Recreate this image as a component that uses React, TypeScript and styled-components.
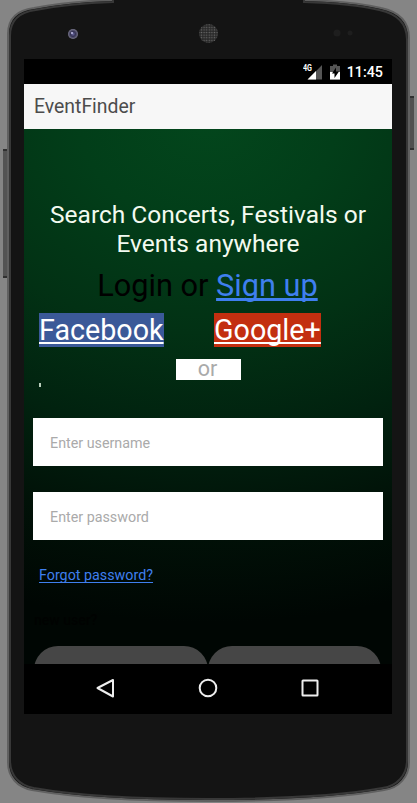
import React from 'react';
import styled, { createGlobalStyle } from 'styled-components';

const GlobalStyle = createGlobalStyle`
  *, *::before, *::after { box-sizing: border-box; }
  html, body { margin: 0; padding: 0; background: #858585; overflow: hidden; }
`;

const Stage = styled.div`
  position: relative;
  display: flex;
  align-items: flex-start;
  width: 417px;
  height: 803px;
  overflow: hidden;
  background: #858585;
  font-family: Roboto, sans-serif;
`;

const DeviceArt = styled.svg`
  position: absolute;
  inset: 0;
  display: block;
`;

const Screen = styled.div`
  position: relative;
  width: 368px;
  height: 655px;
  margin: 59px 0 0 24px;
  display: flex;
  flex-direction: column;
  background: #000;
`;

const StatusBar = styled.div`
  height: 25px;
  flex: none;
  display: flex;
  align-items: center;
  justify-content: flex-end;
  padding-right: 9px;
  color: #fff;
`;

const Clock = styled.span`
  margin-left: 6px;
  font-size: 14.3px;
  font-weight: 500;
  line-height: 25px;
  padding-top: 1px;
`;

const TitleBar = styled.header`
  height: 45px;
  flex: none;
  padding-left: 10px;
  background: #f7f7f7;
  color: #4c4c4c;
  font-size: 19.4px;
  line-height: 45px;
`;

const Content = styled.main`
  flex: 1;
  min-height: 0;
  overflow: hidden;
  display: flex;
  flex-direction: column;
  background: radial-gradient(ellipse 640px 500px at 50% -6px, #03461c 0%, #023e19 20%, #023114 42%, #01220f 62%, #011208 80%, #000603 100%);

  & > * { flex: none; }
`;

const Headline = styled.h1`
  margin: 71px 0 0;
  text-align: center;
  color: #f3faf0;
  font-size: 24.5px;
  font-weight: 400;
  line-height: 29px;
  white-space: nowrap;
`;

const LoginLine = styled.div`
  margin-top: 10px;
  padding-right: 1px;
  height: 36px;
  text-align: center;
  font-size: 30.7px;
  line-height: 36px;
  color: #000;
  white-space: nowrap;
`;

const Link = styled.a<{ $thick?: boolean }>`
  color: #3f7fee;
  text-decoration: underline;
  text-decoration-thickness: ${(p) => (p.$thick ? '3px' : '1px')};
  text-underline-offset: 2px;
  text-decoration-skip-ink: none;
`;

const SocialRow = styled.div`
  display: grid;
  grid-template-columns: 175px 1fr;
  justify-items: start;
  margin: 9px 0 0 15px;
`;

const SocialLink = styled.a<{ $bg: string }>`
  height: 34px;
  background: ${(p) => p.$bg};
  color: #fff;
  font-size: 28.7px;
  line-height: 34px;
  text-decoration: underline;
  text-decoration-thickness: 2px;
  text-underline-offset: 2px;
  text-decoration-skip-ink: none;
  white-space: nowrap;
`;

const Divider = styled.div`
  width: 65px;
  height: 21px;
  margin: 12px 0 0 152px;
  padding-right: 2px;
  background: #fff;
  color: #aaa;
  text-align: center;
  font-size: 21.5px;
  line-height: 20px;
`;

const Tick = styled.div`
  width: 2px;
  height: 4px;
  margin: 3px 0 0 15px;
  background: #b9cdbb;
`;

const Form = styled.form`
  margin-top: 31px;
`;

const Field = styled.input`
  display: block;
  width: 349.5px;
  height: 48px;
  margin: 0 0 26px 9px;
  padding: 1px 17px 0;
  border: 0;
  border-radius: 0;
  background: #fff;
  font: 14.3px Roboto, sans-serif;
  &::placeholder { color: #aaa; opacity: 1; }
`;

const Forgot = styled.div`
  margin: 0 0 0 15px;
  height: 18px;
  font-size: 14.3px;
  line-height: 18px;
`;

const NewUser = styled.div`
  margin: 27px 0 0 10px;
  height: 18px;
  color: #000201;
  font-size: 14px;
  font-weight: 500;
  line-height: 18px;
`;

const Actions = styled.div`
  display: flex;
  margin: 17px 0 0 10px;
`;

const Action = styled.button`
  width: 173.5px;
  height: 48px;
  flex: none;
  border: 0;
  border-radius: 24px;
  background: #464646;
`;

const NavBar = styled.nav`
  height: 50px;
  flex: none;
  display: flex;
  align-items: center;
  justify-content: center;
  gap: 78px;
  padding-bottom: 2px;
  background: #000;
`;

const outline =
  'M8 34 C8 18 18 10 34 8 C60 3 82 1 112 0 L112 -6 L305 -6 L305 0 C338 1 364 4 381 8 C400 12 409 22 409 38 L409 762 C409 777 399 788 384 790 C345 797 280 801 208 801 C136 801 72 797 32 790 C17 787 8 777 8 762 Z';

function Device() {
  return (
    <DeviceArt width="417" height="803" viewBox="0 0 417 803">
      <defs>
        <pattern id="mesh" width="2.6" height="2.6" patternUnits="userSpaceOnUse">
          <circle cx="1.3" cy="1.3" r=".75" fill="#686868" />
        </pattern>
        <radialGradient id="lens">
          <stop offset="0" stopColor="#6a68a0" />
          <stop offset=".5" stopColor="#353354" />
          <stop offset="1" stopColor="#77758a" />
        </radialGradient>
      </defs>
      <rect x="3" y="150" width="5" height="127" fill="#535353" />
      <path d="M3 150h5M3 277h5" stroke="#303030" strokeWidth="2" />
      <rect x="409" y="97" width="5" height="52" fill="#505050" />
      <path d="M409 97h5M409 149h5" stroke="#303030" strokeWidth="2" />
      <path d={outline} fill="#141414" stroke="#606060" strokeWidth="2" />
      <path d={outline} fill="#141414" stroke="#383838" strokeWidth="2" transform="translate(2.1 2) scale(.99 .995)" />
      <circle cx="73" cy="34" r="5" fill="url(#lens)" />
      <circle cx="72" cy="33" r="1" fill="#c3c2e8" />
      <circle cx="208.500" cy="33.500" r="9.500" fill="#292929" />
      <circle cx="208.500" cy="33.500" r="9.500" fill="url(#mesh)" />
      <circle cx="337" cy="33" r="3.500" fill="#1e1e1e" />
      <circle cx="350" cy="33" r="2.500" fill="#1e1e1e" />
    </DeviceArt>
  );
}

function StatusIcons() {
  return (
    <svg width="38" height="18" viewBox="0 0 38 18">
      <path d="M19 2v14.500H5z" fill="#555" />
      <path d="M13 8V16.500H4.500z" fill="#fff" />
      <text x="0" y="8" fontFamily="Roboto" fontWeight="700" fontSize="9" fill="#fff" textLength="9" lengthAdjust="spacingAndGlyphs">4G</text>
      <path d="M27 3h3V1.500h4V3h3v13.500H27z" fill="#555" />
      <path d="M27 9h10v7.500H27z" fill="#fff" />
      <path d="M33 4.500l-4 6h2.500v4.500L36 8.500h-3z" fill="#000" />
    </svg>
  );
}

export default function App() {
  return (
    <Stage>
      <GlobalStyle />
      <Device />
      <Screen>
        <StatusBar>
          <StatusIcons />
          <Clock>11:45</Clock>
        </StatusBar>
        <TitleBar>EventFinder</TitleBar>
        <Content>
          <Headline>
            Search Concerts, Festivals or
            <br />
            Events anywhere
          </Headline>
          <LoginLine>
            Login or <Link $thick>Sign up</Link>
          </LoginLine>
          <SocialRow>
            <SocialLink $bg="#3b5998">Facebook</SocialLink>
            <SocialLink $bg="#c32f10">Google+</SocialLink>
          </SocialRow>
          <Divider>or</Divider>
          <Tick />
          <Form>
            <Field placeholder="Enter username" />
            <Field type="password" placeholder="Enter password" />
          </Form>
          <Forgot>
            <Link>Forgot password?</Link>
          </Forgot>
          <NewUser>new user?</NewUser>
          <Actions>
            <Action aria-label="Log in" />
            <Action aria-label="Register" />
          </Actions>
        </Content>
        <NavBar>
          <svg width="24" height="24" viewBox="0 0 24 24" fill="none" stroke="#eee" strokeWidth="2">
            <path d="M19 4v16.500L3.500 12z" strokeLinejoin="round" />
          </svg>
          <svg width="24" height="24" viewBox="0 0 24 24" fill="none" stroke="#eee" strokeWidth="2">
            <circle cx="12" cy="12" r="8.300" />
          </svg>
          <svg width="24" height="24" viewBox="0 0 24 24" fill="none" stroke="#eee" strokeWidth="2">
            <rect x="4.500" y="4.500" width="15" height="15" rx=".5" />
          </svg>
        </NavBar>
      </Screen>
    </Stage>
  );
}
